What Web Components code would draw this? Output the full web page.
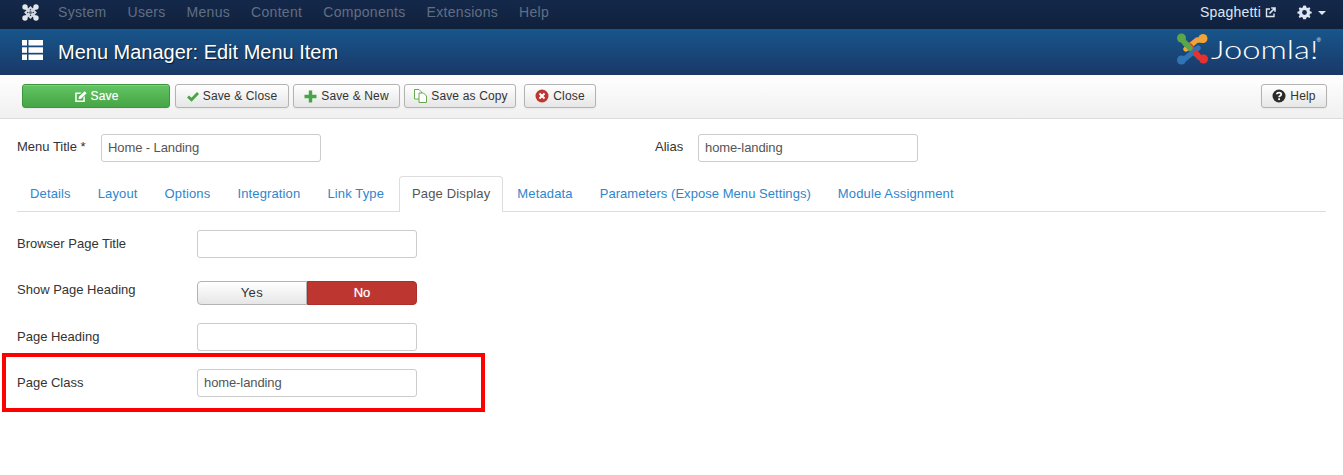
<!DOCTYPE html>
<html lang="en">
<head>
<meta charset="utf-8">
<title>Menu Manager: Edit Menu Item</title>
<style>
html,body{margin:0;padding:0;background:#fff;}
body{font-family:"Liberation Sans",Arial,sans-serif;font-size:13px;color:#333;}
</style>
</head>
<body>
<jm-navbar></jm-navbar>
<jm-header>Menu Manager: Edit Menu Item</jm-header>
<jm-toolbar>
    <jm-button kind="success" icon="edit" style="width:148px">Save</jm-button>
    <jm-button icon="check" style="width:114px;margin-left:5px">Save &amp; Close</jm-button>
    <jm-button icon="plus" style="width:107px;margin-left:4px">Save &amp; New</jm-button>
    <jm-button icon="copy" style="width:112px;margin-left:4px;padding-left:2px">Save as Copy</jm-button>
    <jm-button icon="cancel" style="width:72px;margin-left:8px">Close</jm-button>
    <jm-button icon="help" style="width:66px;margin-left:auto">Help</jm-button>
</jm-toolbar>
<jm-form-page>
    <jm-title-row>
        <jm-text-input label="Menu Title *" value="Home - Landing" label-width="84"></jm-text-input>
        <jm-text-input label="Alias" value="home-landing" label-width="43" style="margin-left:334px"></jm-text-input>
    </jm-title-row>
    <jm-tabs active="Page Display" items="Details|Layout|Options|Integration|Link Type|Page Display|Metadata|Parameters (Expose Menu Settings)|Module Assignment"></jm-tabs>
    <jm-text-input class="row" label="Browser Page Title" label-width="180"></jm-text-input>
    <jm-toggle class="row" label="Show Page Heading"></jm-toggle>
    <jm-text-input class="row" label="Page Heading" label-width="180"></jm-text-input>
    <jm-text-input class="row" label="Page Class" value="home-landing" label-width="180" marked></jm-text-input>
</jm-form-page>

<script>
const ICONS = {
    mark: `<svg width="17" height="17" viewBox="0 0 17 17" fill="none"><g stroke="#d3d8df" stroke-width="2.600"><path d="M3 3L14 14M14 3L3 14"/><path d="M8.500 3.500L13.500 8.500L8.500 13.500L3.500 8.500Z" stroke-width="2"/></g><circle cx="8.500" cy="8.500" r="1.500" fill="#5f6e84"/><g fill="#e3e6ea"><circle cx="3" cy="3" r="2.700"/><circle cx="14" cy="3" r="2.700"/><circle cx="3" cy="14" r="2.700"/><circle cx="14" cy="14" r="2.700"/></g></svg>`,
    list: `<svg width="21" height="20" viewBox="0 0 21 20" fill="#fff"><rect x="0" y="0" width="5" height="5.500"/><rect x="6.500" y="0" width="14.500" height="5.500"/><rect x="0" y="7.300" width="5" height="5.500"/><rect x="6.500" y="7.300" width="14.500" height="5.500"/><rect x="0" y="14.500" width="5" height="5.500"/><rect x="6.500" y="14.500" width="14.500" height="5.500"/></svg>`,
    edit: `<svg width="13" height="13" viewBox="0 0 13 13"><path d="M1.800 2.500H7.500L6 4H2.700V10.500H9.300V7.500L10.800 6V12H1.200V2.500Z" fill="#fff"/><path d="M5 6.800L10.600 1.200L12.600 3.200L7 8.800L4.500 9.300Z" fill="#fff"/></svg>`,
    check: `<svg width="12" height="11" viewBox="0 0 12 11"><path d="M1 5.500L4.500 8.800L11 2" fill="none" stroke="#46a546" stroke-width="2.800"/></svg>`,
    plus: `<svg width="13" height="13" viewBox="0 0 13 13"><path d="M6.500 .5V12.500M.5 6.500H12.500" stroke="#46a546" stroke-width="3.400"/></svg>`,
    copy: `<svg width="13" height="14" viewBox="0 0 13 14" fill="#fff" stroke="#6aa84f" stroke-width="1"><path d="M.5 .5H5L7.500 3V10H.5Z"/><path d="M5 4H9.500L12.500 7V13.500H5Z"/></svg>`,
    cancel: `<svg width="14" height="14" viewBox="0 0 14 14"><circle cx="7" cy="7" r="6.500" fill="#bd362f"/><path d="M4.500 4.500L9.500 9.500M9.500 4.500L4.500 9.500" stroke="#fff" stroke-width="2"/></svg>`,
    help: `<svg width="14" height="14" viewBox="0 0 14 14"><circle cx="7" cy="7" r="6.500" fill="#2b2b2b"/><path d="M4.800 5.300C4.900 3 9.300 3 9.300 5.300C9.300 6.800 7.100 6.700 7.100 8.300" fill="none" stroke="#fff" stroke-width="1.700"/><rect x="6.200" y="9.300" width="1.800" height="1.800" fill="#fff"/></svg>`,
    external: `<svg width="11" height="11" viewBox="0 0 11 11" fill="none" stroke="#dfe5ee"><path d="M5 2H1.500V9.500H9V6.500" stroke-width="1.400"/><path d="M4.500 6.500L9.500 1.500M6.200 1H10V4.800" stroke-width="1.600"/></svg>`,
    gear: `<svg width="15" height="15" viewBox="0 0 15 15"><path d="M7.500 0.500L9 .8L9.400 2.500L10.800 3.100L12.300 2.200L13.400 3.400L12.500 4.900L13 6.300L14.700 6.700V8.400L13 8.800L12.500 10.200L13.400 11.700L12.300 12.900L10.800 12L9.400 12.600L9 14.300H6.200L5.700 12.600L4.300 12L2.800 12.900L1.700 11.700L2.600 10.200L2.100 8.800L.4 8.400V6.700L2.100 6.300L2.600 4.900L1.700 3.400L2.800 2.200L4.300 3.100L5.700 2.500L6.200 .8Z" fill="#dfe5ee"/><circle cx="7.500" cy="7.500" r="2.400" fill="#13284a"/></svg>`,
    logo: `<svg width="32" height="32" viewBox="0 0 32 32" fill="none" stroke-width="5.400" stroke-linecap="round" stroke-linejoin="round">
        <path d="M4.500 6L8 10L19 21" stroke="#5ba646"/><circle cx="4.500" cy="5" r="4.500" fill="#5ba646"/>
        <path d="M26 7L20 7L9 16" stroke="#f0a33a"/><circle cx="26" cy="5.500" r="4.500" fill="#f0a33a"/>
        <path d="M26 26L22 24L13 13" stroke="#e8312e"/><circle cx="26.500" cy="26" r="4.500" fill="#e8312e"/>
        <path d="M5 27L9 25L21 15" stroke="#2f75b5"/><circle cx="4.500" cy="27" r="4.500" fill="#2f75b5"/>
        <path d="M8 10L13 15" stroke="#5ba646"/><path d="M19 20L22 24" stroke="#e8312e"/>
    </svg>`
};

class JmNavbar extends HTMLElement{
    constructor() {
        super();
        this.attachShadow({mode:"open"});
        this.shadowRoot.innerHTML = `
        <style>
        :host{display:flex;align-items:center;height:29px;box-sizing:border-box;padding:0 17px 5px 22px;
            background:linear-gradient(#14284b,#10213c);font-size:14px;color:#616f83;}
        svg{display:block;}
        nav{display:flex;margin-left:19px;letter-spacing:.3px;}
        nav span{margin-right:21px;}
        .right{margin-left:auto;display:flex;align-items:center;color:#dfe5ee;}
        .name{letter-spacing:.2px;}
        .gap{margin-left:4px;}
        .caret{width:0;height:0;border:4px solid transparent;border-top-color:#dfe5ee;border-bottom:0;margin-left:6px;margin-top:2px;}
        .gear{margin-left:21px;}
        </style>
        ${ICONS.mark}
        <nav><span>System</span><span>Users</span><span>Menus</span><span>Content</span><span>Components</span><span>Extensions</span><span>Help</span></nav>
        <div class="right"><span class="name">Spaghetti</span><span class="gap">${ICONS.external}</span><span class="gear">${ICONS.gear}</span><span class="caret"></span></div>`;
    }
}
customElements.define('jm-navbar',JmNavbar);

class JmHeader extends HTMLElement{
    constructor() {
        super();
        this.attachShadow({mode:"open"});
        this.shadowRoot.innerHTML = `
        <style>
        :host{display:flex;align-items:center;height:46px;box-sizing:border-box;padding:0 22px 0 22px;
            background:linear-gradient(#17568c,#1a3867);color:#fff;}
        svg{display:block;}
        .list{margin-bottom:4px;}
        h1{margin:0 0 0 15px;font-size:20px;font-weight:normal;text-shadow:1px 1px 1px rgba(0,0,0,.6);}
        .logo{margin-left:auto;display:flex;align-items:center;margin-top:-6px;}
        .word{display:block;width:106px;font-family:"Lato","Liberation Sans",sans-serif;font-weight:300;font-size:26px;line-height:32px;margin-left:2px;
            transform:scaleX(1.26);transform-origin:left center;white-space:nowrap;}
        sup{font-size:6px;align-self:flex-start;line-height:14px;}
        </style>
        <span class="list">${ICONS.list}</span>
        <h1><slot></slot></h1>
        <div class="logo">${ICONS.logo}<span class="word">Joomla!</span><sup>®</sup></div>`;
    }
}
customElements.define('jm-header',JmHeader);

class JmToolbar extends HTMLElement{
    constructor() {
        super();
        this.attachShadow({mode:"open"});
        this.shadowRoot.innerHTML = `
        <style>
        :host{display:flex;align-items:flex-start;height:44px;box-sizing:border-box;padding:9px 16px 0 22px;
            background:linear-gradient(#fff,#f0f0f0);border-bottom:1px solid #dcdcdc;}
        </style>
        <slot></slot>`;
    }
}
customElements.define('jm-toolbar',JmToolbar);

class JmButton extends HTMLElement{
    constructor() {
        super();
        this.attachShadow({mode:"open"});
        this.shadowRoot.innerHTML = `
        <style>
        :host{display:flex;flex:none;align-items:center;justify-content:center;height:24px;box-sizing:border-box;
            border:1px solid #b3b3b3;border-radius:3px;font-size:12px;letter-spacing:.15px;color:#333;
            background:linear-gradient(#fff,#e6e6e6);box-shadow:inset 0 1px 0 rgba(255,255,255,.2),0 1px 2px rgba(0,0,0,.05);}
        :host([kind="success"]){background:linear-gradient(#62c462,#46a546);border-color:#3f953f;color:#fff;text-shadow:0 0 1px rgba(255,255,255,.5);}
        span{display:flex;margin-right:4px;}
        </style>
        <span>${ICONS[this.getAttribute('icon')]}</span><slot></slot>`;
    }
}
customElements.define('jm-button',JmButton);

class JmFormPage extends HTMLElement{
    constructor() {
        super();
        this.attachShadow({mode:"open"});
        this.shadowRoot.innerHTML = `
        <style>
        :host{display:block;padding:15px 17px 0;}
        ::slotted(.row){margin-bottom:18px;}
        </style>
        <slot></slot>`;
    }
}
customElements.define('jm-form-page',JmFormPage);

class JmTitleRow extends HTMLElement{
    constructor() {
        super();
        this.attachShadow({mode:"open"});
        this.shadowRoot.innerHTML = `
        <style>:host{display:flex;margin-bottom:14px;}</style>
        <slot></slot>`;
    }
}
customElements.define('jm-title-row',JmTitleRow);

class JmTextInput extends HTMLElement{
    constructor() {
        super();
        this.attachShadow({mode:"open"});
        const labelWidth = this.getAttribute('label-width');
        const mark = this.hasAttribute('marked') ? '<div class="mark"></div>' : '';
        this.shadowRoot.innerHTML = `
        <style>
        :host{display:flex;position:relative;}
        label{width:${labelWidth}px;flex:none;padding-top:5px;line-height:16px;}
        :host(.row) label{padding-top:6px;}
        .box{width:220px;height:28px;box-sizing:border-box;border:1px solid #ccc;border-radius:3px;background:#fff;
            padding:0 6px;line-height:26px;color:#555;letter-spacing:-.1px;}
        .mark{position:absolute;left:-15px;top:-16px;width:483px;height:59px;box-sizing:border-box;border:4px solid #f00;}
        </style>
        <label>${this.getAttribute('label')}</label>
        <div class="box">${this.getAttribute('value') || ''}</div>${mark}`;
    }
}
customElements.define('jm-text-input',JmTextInput);

class JmTabs extends HTMLElement{
    constructor() {
        super();
        this.attachShadow({mode:"open"});
        const active = this.getAttribute('active');
        const tabs = this.getAttribute('items').split('|').map(t =>
            `<a class="${t===active ? 'on' : ''} ${t.length>20 ? 'long' : ''}">${t}</a>`).join('');
        this.shadowRoot.innerHTML = `
        <style>
        :host{display:flex;height:36px;box-sizing:border-box;border-bottom:1px solid #ddd;margin-bottom:18px;}
        a{height:36px;box-sizing:border-box;padding:0 12px;margin-left:1px;border:1px solid transparent;border-bottom:0;
            line-height:34px;color:#2f86cc;border-radius:4px 4px 0 0;letter-spacing:.14px;}
        a:first-of-type{margin-left:0;}
        a.long{letter-spacing:.05px;}
        a.on{background:#fff;border-color:#ddd;color:#555;margin-left:2px;}
        </style>
        ${tabs}`;
    }
}
customElements.define('jm-tabs',JmTabs);

class JmToggle extends HTMLElement{
    constructor() {
        super();
        this.attachShadow({mode:"open"});
        this.shadowRoot.innerHTML = `
        <style>
        :host{display:flex;margin-top:23px;}
        label{width:180px;flex:none;line-height:16px;padding-top:1px;}
        .group{display:flex;width:220px;height:24px;font-size:13px;line-height:22px;text-align:center;box-sizing:border-box;}
        .yes{flex:110;border:1px solid #b3b3b3;border-radius:4px 0 0 4px;background:linear-gradient(#fff,#e6e6e6);color:#333;letter-spacing:.5px;}
        .no{flex:110;border:1px solid #a9302a;border-radius:0 4px 4px 0;background:#bd362f;color:#fff;text-shadow:0 0 1px rgba(255,255,255,.6);}
        </style>
        <label>${this.getAttribute('label')}</label>
        <div class="group"><div class="yes">Yes</div><div class="no">No</div></div>`;
    }
}
customElements.define('jm-toggle',JmToggle);
</script>
</body>
</html>
